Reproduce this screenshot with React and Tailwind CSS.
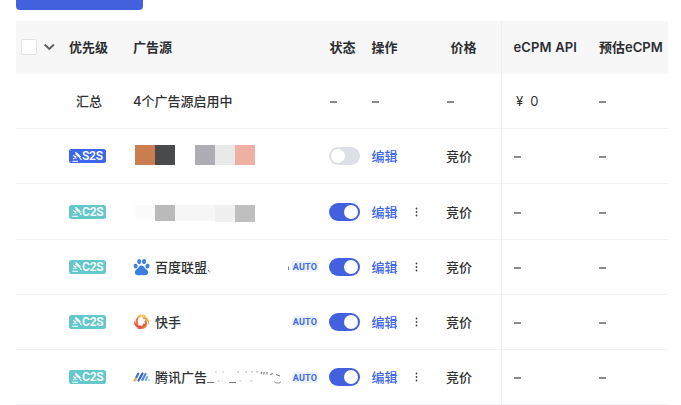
import React, { useState } from 'react';

const rows = [
  { id: 1, type: 'S2S', mask: 'color', enabled: false, more: false },
  { id: 2, type: 'C2S', mask: 'gray', enabled: true, more: true },
  { id: 3, type: 'C2S', icon: 'baidu', name: '百度联盟', auto: true, enabled: true, more: true },
  { id: 4, type: 'C2S', icon: 'kuaishou', name: '快手', auto: true, enabled: true, more: true },
  { id: 5, type: 'C2S', icon: 'tencent', name: '腾讯广告', auto: true, enabled: true, more: true },
];

const Dash = () => <span className="block w-[7px] h-[2px] mt-[2px] bg-[#8c8c8c]"></span>;

const BidTag = ({ type }) => (
  <span
    className={`flex items-center w-[37px] h-[14px] pl-[3px] rounded-[2.5px] text-white ${
      type === 'S2S' ? 'bg-[#3c66ee]' : 'bg-[#62c8cb]'
    }`}
  >
    <svg className="shrink-0" width="10" height="11" viewBox="0 0 10 11" fill="none" stroke="currentColor">
      <path d="M3.400 1.200l5 4.800" strokeWidth="1.3" />
      <path d="M3.600 3.200L5 2l2.300 2.300L5.900 5.600z" fill="currentColor" strokeWidth="0.500" />
      <path d="M1.300 4.300l3.300 3.200M4.300 5.300L1 8M6.500 5l3 4" strokeWidth="1.2" />
      <path d="M0.400 10.300h5.600" strokeWidth="1" />
    </svg>
    <span className="font-['Roboto',sans-serif] text-[12px] leading-[14px] font-semibold tracking-[-0.2px]">
      {type}
    </span>
  </span>
);

const Switch = ({ checked, onClick }) => (
  <button
    type="button"
    onClick={onClick}
    className={`flex items-center w-[31px] h-[18px] p-[2px] rounded-full ${
      checked ? 'justify-end bg-[#4361df]' : 'justify-start bg-[#dcdfe3]'
    }`}
  >
    <span className="block w-[14px] h-[14px] rounded-full bg-white"></span>
  </button>
);

const SourceIcon = ({ name }) => {
  if (name === 'baidu') {
    return (
      <svg width="17" height="18" viewBox="0 0 17 18" fill="#3c7fdd">
        <ellipse cx="2.6" cy="8.1" rx="2" ry="2.4" transform="rotate(-15 2.6 8.1)" />
        <ellipse cx="6.2" cy="3.6" rx="2" ry="2.6" />
        <ellipse cx="11" cy="3.6" rx="2" ry="2.6" transform="rotate(8 11 3.6)" />
        <ellipse cx="14.5" cy="8.1" rx="2" ry="2.4" transform="rotate(15 14.5 8.1)" />
        <path d="M8.500 7.600c1.800 0 2.400 1.400 3.400 2.500 1.300 1.300 3.300 2.300 3.300 4.200 0 1.900-1.400 3-3.200 3-1.300 0-2.200-.4-3.500-.4s-2.200.4-3.500.4c-1.800 0-3.200-1.100-3.200-3 0-1.900 2-2.900 3.300-4.200 1-1.100 1.600-2.500 3.400-2.500z" />
      </svg>
    );
  }
  if (name === 'kuaishou') {
    return (
      <svg width="17" height="18" viewBox="0 0 17 18">
        <path d="M4.500 3.600C7 .8 12.500.8 14 4.600 11.500 2.900 8 3 5.500 5.300z" fill="#f3c052" />
        <path d="M9.500 3.700c4.500-.3 8 3.800 6.300 8.300-.2-3-2.300-5.800-5.800-6.300z" fill="#ef9f43" />
        <path d="M12.700 6.700c3.500 4 .7 9.300-4.400 9.300 3-1.300 4.600-4.400 3-7.400z" fill="#e87b42" />
        <path d="M13 11.300c-1.400 5-6.800 6.400-10 3 3 .9 6.400-.3 7.400-3.800z" fill="#e55f40" />
        <path d="M8.500 14.800C4 16 .2 12 1.300 7.800c.8 2.900 3.500 5.300 7 4.700z" fill="#de5040" />
        <path d="M4.600 12.500C.8 9.300 2.300 4.200 7 3.300 4.700 5 4 8 5.700 10.600z" fill="#ea7845" />
      </svg>
    );
  }
  return (
    <svg width="17" height="18" viewBox="0 0 17 18" fill="none" strokeLinecap="round">
      <path d="M1.800 12.200l.8-1" stroke="#efac3c" strokeWidth="2.600" />
      <path d="M3.300 9.200l2-3.600" stroke="#4472d3" strokeWidth="2.200" />
      <path d="M5.500 12.500l4-7" stroke="#3267c9" strokeWidth="2.200" />
      <path d="M9.300 12l3.200-6" stroke="#4c86df" strokeWidth="2.200" />
      <path d="M12.700 12l1.500-3" stroke="#72a9e9" strokeWidth="2" />
      <path d="M15.800 12.400v-.3" stroke="#9dd1f0" strokeWidth="1.700" />
    </svg>
  );
};

// Hidden source names
const Mask = ({ kind }) =>
  kind === 'color' ? (
    <div className="flex h-[20px] ml-[2px] mb-[3px]">
      <span className="w-[20px] bg-[#ca7e50]"></span>
      <span className="w-[20px] bg-[#484a4c]"></span>
      <span className="w-[20px]"></span>
      <span className="w-[20px] bg-[#aeadb3]"></span>
      <span className="w-[20px] bg-[#e9e9e9]"></span>
      <span className="w-[20px] bg-[#efb0a4]"></span>
    </div>
  ) : (
    <div className="flex h-[17px] ml-[2px] mt-[3px]">
      <span className="w-[20px] h-[15px] bg-[#fbfbfb]"></span>
      <span className="w-[20px] h-[16px] bg-[#bababa]"></span>
      <span className="w-[40px] h-[16px] bg-[#f6f6f6]"></span>
      <span className="w-[20px] bg-[#f0f0f0]"></span>
      <span className="w-[20px] bg-[#bfbfbf]"></span>
    </div>
  );

// Leftover strokes of the erased part of the name
const Remains = ({ icon }) => {
  if (icon === 'baidu') {
    return (
      <svg className="ml-px" width="82" height="18" viewBox="0 0 82 18" fill="none">
        <path d="M0.300 12l1.200 2.400" stroke="#777" />
        <path d="M80.500 8.500v3.500" stroke="#6481e3" />
      </svg>
    );
  }
  if (icon === 'tencent') {
    return (
      <svg width="76" height="18" viewBox="0 0 76 18" fill="none" stroke="#777">
        <path d="M0 14.500h7M22 14.500h7" />
        <path d="M9 4.500v-1M16 4.500v-1M31 4.500V3M39 4.500V3M45 4.500V3M50 4.500V3" stroke="#999" />
        <path d="M10 13h3M15 13h1M32 13h3M43 13h3" stroke="#ccc" />
        <path d="M54 6l1-2M57 6.500V4M60 6.500V4M63 6.500l3-1M69 6.500l4 1.500" strokeWidth="1.100" />
        <path d="M67 13.500l2 1.500h4l.5-1.500" stroke="#999" />
      </svg>
    );
  }
  return null;
};

const grid = 'grid grid-cols-[53px_64px_196px_42px_75px_55px_98px_69px] items-center';

const App = () => {
  const [sources, setSources] = useState(rows);

  const toggle = (id) => {
    setSources(sources.map((s) => (s.id === id ? { ...s, enabled: !s.enabled } : s)));
  };

  return (
    <div className="w-[681px] h-[405px] overflow-hidden bg-white pl-4 font-['Inter','Noto_Sans_CJK_SC',sans-serif] text-[13px] leading-[18px] font-medium text-[#303133]">
      <div className="w-[127px] h-[10px] rounded-b-[4px] bg-[#4361df]"></div>
      <div className="relative w-[652px] mt-[11px]">
        <div className={`${grid} h-[53.1px] pb-px bg-[#f7f7f8] font-bold text-[#2c2d2f]`}>
          <div className="flex items-center pl-[5px]">
            <span className="block w-[16px] h-[16px] rounded-[2px] border border-[#e1e2e4] bg-white"></span>
            <svg className="ml-[6px]" width="13" height="12" viewBox="0 0 13 12" fill="none" stroke="#5c5e61" strokeWidth="1.900">
              <path d="M1.700 3.500l4.600 4.500 4.600-4.500" />
            </svg>
          </div>
          <div>优先级</div>
          <div>广告源</div>
          <div className="pl-[0.4px]">状态</div>
          <div className="pl-[0.4px]">操作</div>
          <div className="pl-[4.5px]">价格</div>
          <div className="pl-[12.5px] font-semibold tracking-[0.15px] whitespace-nowrap">eCPM API</div>
          <div className="whitespace-nowrap font-semibold">预估eCPM</div>
        </div>

        <div className={`${grid} h-[55.2px] border-b border-[#f1f2f3]`}>
          <div></div>
          <div className="pl-[7px]">汇总</div>
          <div>4个广告源启用中</div>
          <div className="pl-px"><Dash /></div>
          <div className="pl-px"><Dash /></div>
          <div className="pl-px"><Dash /></div>
          <div className="flex gap-[7px] pl-[15px] font-normal"><span>¥</span><span>0</span></div>
          <div><Dash /></div>
        </div>

        {sources.map((s) => (
          <div key={s.id} className={`${grid} h-[55.2px] border-b border-[#f1f2f3]`}>
            <div></div>
            <div><BidTag type={s.type} /></div>
            <div className="flex items-center h-full pr-[11px]">
              {s.mask && <Mask kind={s.mask} />}
              {s.icon && <SourceIcon name={s.icon} />}
              {s.name && <span className="ml-[5px] whitespace-nowrap">{s.name}</span>}
              <Remains icon={s.icon} />
              {s.auto && (
                <span className="shrink-0 ml-auto w-[26px] h-[11px] rounded-[2px] bg-[#ecf2fb] text-center font-['Roboto',sans-serif] text-[9px] leading-[12px] font-bold tracking-[0.2px] text-[#4168e0]">
                  AUTO
                </span>
              )}
            </div>
            <div><Switch checked={s.enabled} onClick={() => toggle(s.id)} /></div>
            <div className="flex items-center pl-[0.4px] text-[#3d67e6]">
              <span>编辑</span>
              {s.more && (
                <svg className="ml-[18px]" width="3" height="10" viewBox="0 0 3 10" fill="#404040">
                  <circle cx="1.500" cy="1.500" r="0.900" />
                  <circle cx="1.500" cy="5" r="0.900" />
                  <circle cx="1.500" cy="8.500" r="0.900" />
                </svg>
              )}
            </div>
            <div>竞价</div>
            <div className="pl-[13px]"><Dash /></div>
            <div><Dash /></div>
          </div>
        ))}
        {/* edge of the scrolling columns */}
        <div className="absolute top-0 bottom-0 left-[485px] w-px bg-[#eceef0]"></div>
      </div>
    </div>
  );
};

export default App;
